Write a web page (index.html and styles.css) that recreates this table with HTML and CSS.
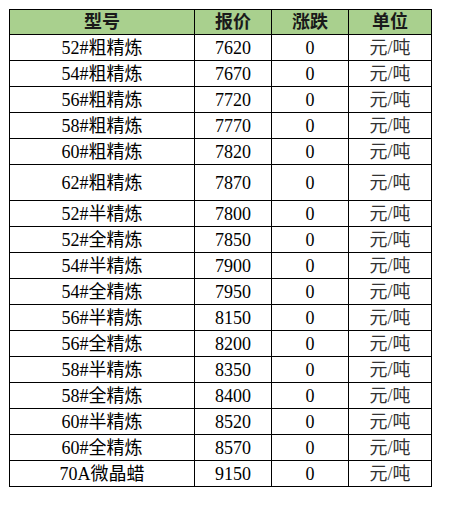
FILE: index.html
```html
<!DOCTYPE html>
<html lang="zh">
<head>
<meta charset="utf-8">
<title>价格表</title>
<link rel="stylesheet" href="styles.css">
</head>
<body>
<table class="price">
<colgroup>
<col class="c1"><col class="c2"><col class="c3"><col class="c4">
</colgroup>
<thead>
<tr class="head"><th>型号</th><th>报价</th><th>涨跌</th><th>单位</th></tr>
</thead>
<tbody>
<tr><td>52#粗精炼</td><td>7620</td><td>0</td><td>元/吨</td></tr>
<tr><td>54#粗精炼</td><td>7670</td><td>0</td><td>元/吨</td></tr>
<tr><td>56#粗精炼</td><td>7720</td><td>0</td><td>元/吨</td></tr>
<tr><td>58#粗精炼</td><td>7770</td><td>0</td><td>元/吨</td></tr>
<tr><td>60#粗精炼</td><td>7820</td><td>0</td><td>元/吨</td></tr>
<tr class="tall"><td>62#粗精炼</td><td>7870</td><td>0</td><td>元/吨</td></tr>
<tr><td>52#半精炼</td><td>7800</td><td>0</td><td>元/吨</td></tr>
<tr><td>52#全精炼</td><td>7850</td><td>0</td><td>元/吨</td></tr>
<tr><td>54#半精炼</td><td>7900</td><td>0</td><td>元/吨</td></tr>
<tr><td>54#全精炼</td><td>7950</td><td>0</td><td>元/吨</td></tr>
<tr><td>56#半精炼</td><td>8150</td><td>0</td><td>元/吨</td></tr>
<tr><td>56#全精炼</td><td>8200</td><td>0</td><td>元/吨</td></tr>
<tr><td>58#半精炼</td><td>8350</td><td>0</td><td>元/吨</td></tr>
<tr><td>58#全精炼</td><td>8400</td><td>0</td><td>元/吨</td></tr>
<tr><td>60#半精炼</td><td>8520</td><td>0</td><td>元/吨</td></tr>
<tr><td>60#全精炼</td><td>8570</td><td>0</td><td>元/吨</td></tr>
<tr><td>70A微晶蜡</td><td>9150</td><td>0</td><td>元/吨</td></tr>
</tbody>
</table>
</body>
</html>
```
FILE: styles.css
```css
html, body {
  margin: 0;
  padding: 0;
  background: #fff;
}
body {
  padding: 9px 0 0 9px;
  font-family: "Liberation Serif", "Noto Sans CJK SC", serif;
  font-size: 18px;
  color: #000;
}
.price {
  border-collapse: separate;
  border-spacing: 0;
  table-layout: fixed;
  width: 422px;
  border-top: 1px solid #000;
  border-left: 1px solid #000;
}
.c1 { width: 185px; }
.c2 { width: 77px; }
.c3 { width: 77px; }
.c4 { width: 83px; }
.price th,
.price td {
  box-sizing: border-box;
  padding: 0;
  border-right: 1px solid #000;
  border-bottom: 1px solid #000;
  text-align: center;
  vertical-align: middle;
  line-height: 20px;
  height: 26px;
  white-space: nowrap;
}
.price th {
  background: #a9d08e;
  font-weight: bold;
  color: #1a1a1a;
  height: 25px;
}
.price .tall td {
  height: 36px;
}
.price td:last-child {
  color: #333;
}
```
